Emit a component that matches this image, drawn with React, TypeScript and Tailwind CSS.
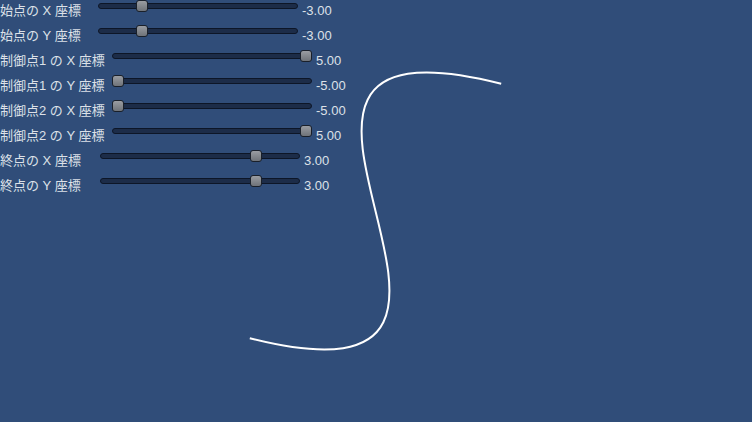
const params = [
  { label: "始点の X 座標", value: -3, labelW: "w-[98px]" },
  { label: "始点の Y 座標", value: -3, labelW: "w-[98px]" },
  { label: "制御点1 の X 座標", value: 5, labelW: "w-[112px]" },
  { label: "制御点1 の Y 座標", value: -5, labelW: "w-[112px]" },
  { label: "制御点2 の X 座標", value: -5, labelW: "w-[112px]" },
  { label: "制御点2 の Y 座標", value: 5, labelW: "w-[112px]" },
  { label: "終点の X 座標", value: 3, labelW: "w-[100px]" },
  { label: "終点の Y 座標", value: 3, labelW: "w-[100px]" },
];

const MIN = -5;
const MAX = 5;
const TRACK_W = 200;
const THUMB_W = 12;

const Slider = ({ value }: { value: number }) => {
  const left = ((value - MIN) / (MAX - MIN)) * (TRACK_W - THUMB_W);

  return (
    <div className="relative w-[200px] h-[11px] shrink-0">
      <div className="absolute inset-x-0 top-[2.5px] h-[6px] rounded-full bg-[#1c2c48] border border-[#0d1627]" />
      <div
        className="absolute top-[-0.5px] w-[12px] h-[12px] rounded-[3px] border border-[#1a202a] bg-gradient-to-b from-[#9a9da2] to-[#6f7379]"
        style={{ left }}
      />
    </div>
  );
};

export default function App() {
  return (
    <div
      className="relative w-[752px] h-[422px] overflow-hidden bg-[#304d79] text-[13px] text-[#dde1e8]"
      style={{ fontFamily: '"Liberation Sans", "Noto Sans CJK JP", sans-serif' }}
    >
      {/* curve */}
      <svg
        className="absolute inset-0"
        width="752"
        height="422"
        viewBox="0 0 752 422"
      >
        <path
          d="M249.8 338.2 C585 423 166 -1 501.2 83.8"
          fill="none"
          stroke="#ffffff"
          strokeWidth="2"
        />
      </svg>

      <div className="relative flex flex-col">
        {params.map((p) => (
          <div key={p.label} className="flex items-start h-[25px]">
            <span className={`${p.labelW} shrink-0 leading-[21px] whitespace-nowrap`}>
              {p.label}
            </span>
            <Slider value={p.value} />
            <span className="ml-[4px] leading-[21px]">{p.value.toFixed(2)}</span>
          </div>
        ))}
      </div>
    </div>
  );
}
